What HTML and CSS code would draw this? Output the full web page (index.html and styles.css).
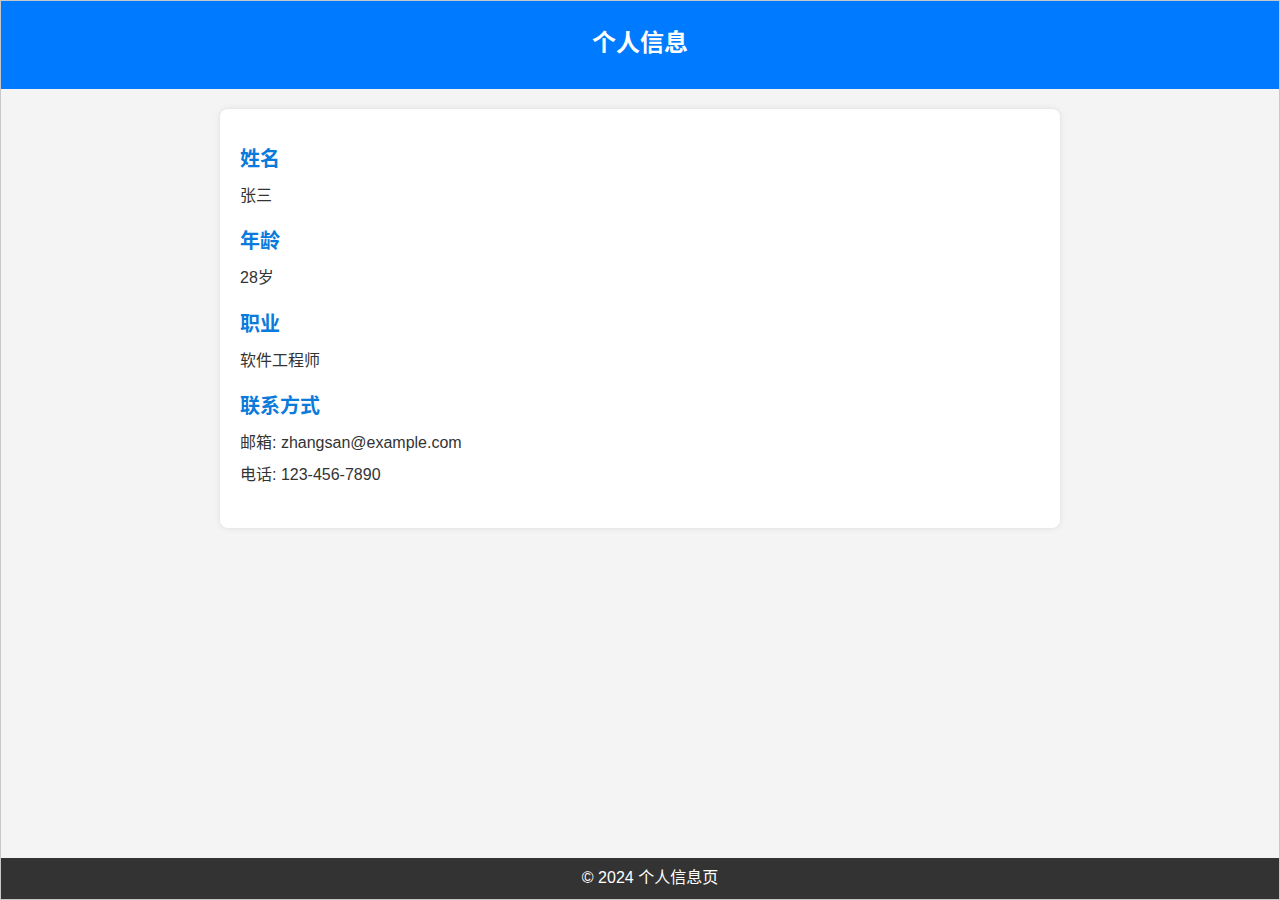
FILE: index.html
```html
<!DOCTYPE html>
<html lang="zh-CN">
<head>
  <meta charset="UTF-8">
  <title>个人信息</title>
  <link rel="stylesheet" href="styles.css">
</head>
<body>

  <header class="site-header">
    <h1>个人信息</h1>
  </header>

  <main class="content">
    <section class="info-card">
      <h2>姓名</h2>
      <p>张三</p>

      <h2>年龄</h2>
      <p>28岁</p>

      <h2>职业</h2>
      <p>软件工程师</p>

      <h2>联系方式</h2>
      <p>邮箱: zhangsan@example.com</p>
      <p>电话: 123-456-7890</p>
    </section>
  </main>

  <footer class="site-footer">
    <p>&copy; 2024 个人信息页</p>
  </footer>

</body>
</html>
```

FILE: styles.css
```css
* { box-sizing: border-box; margin: 0; padding: 0; }
html, body { height: 100%; }
body {
  display: flex;
  flex-direction: column;
  height: 100vh;
  border: 1px solid #c8c8c8;
  background: #f4f4f4;
  color: #333;
  font-family: "Liberation Sans", Arial, "Noto Sans CJK SC", sans-serif;
}
.site-header {
  background: #007bff;
  color: #fff;
  text-align: center;
  padding: 24px 0 28px;
}
.site-header h1 {
  font-size: 24px;
  line-height: 36px;
  font-weight: bold;
}
.content {
  flex: 1;
  padding-top: 20px;
}
.info-card {
  max-width: 840px;
  margin: 0 auto;
  background: #fff;
  border-radius: 8px;
  box-shadow: 0 0 6px rgba(0, 0, 0, 0.1);
  padding: 20px 20px 34px;
}
.info-card h2 {
  font-size: 20px;
  line-height: 28px;
  font-weight: bold;
  color: #0a7bdb;
  margin: 20px 0 11px;
}
.info-card h2:first-child {
  margin-top: 16px;
}
.info-card p {
  font-size: 16px;
  line-height: 23.4px;
  margin: 8px 0;
}
.site-footer {
  background: #333;
  color: #fff;
  text-align: center;
  padding: 9px 0 11px 20px;
}
.site-footer p {
  font-size: 16px;
  line-height: 21px;
}
```
